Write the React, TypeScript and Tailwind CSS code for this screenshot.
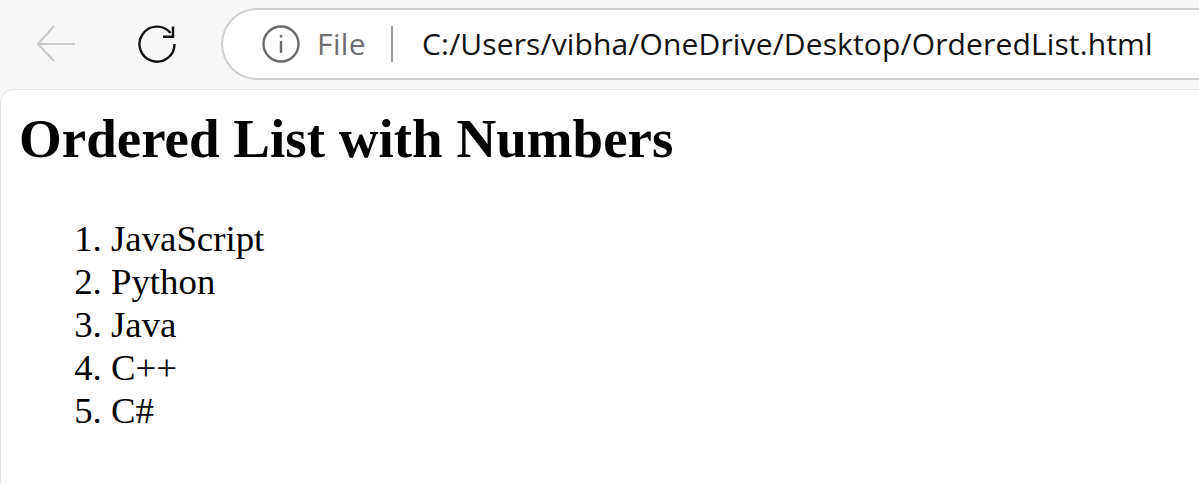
export default function App() {
  const languages = ['JavaScript', 'Python', 'Java', 'C++', 'C#'];

  return (
    <div className="w-[1199px] h-[484px] overflow-hidden bg-[#f7f7f7] font-['Liberation_Serif',serif]">
      {/* Browser toolbar */}
      <div className="h-[89px] flex items-center pl-[37px] pb-[1px] font-['Open_Sans',sans-serif]">
        <svg width="38" height="38" viewBox="0 0 38 38" fill="none" stroke="#c8c8c8" strokeWidth="2" className="shrink-0">
          <path d="M1 19H38M17 1L1 19L17 36" />
        </svg>
        <svg width="38" height="38" viewBox="0 0 38 38" fill="none" stroke="#111" strokeWidth="2.4" className="shrink-0 ml-[63px]">
          <path d="M36.5 19A17.5 17.5 0 1 1 32.5 8" />
          <path d="M35 1.5V11.7H25" />
        </svg>
        <div className="ml-[45px] w-[1000px] h-[72px] shrink-0 flex items-center rounded-l-full border-[2.5px] border-r-0 border-[#d0d0d0] bg-white pl-[39px]">
          <svg width="38" height="38" viewBox="0 0 38 38" fill="none" stroke="#6b6b6b" strokeWidth="2.4" className="shrink-0">
            <circle cx="19" cy="19" r="17.5" />
            <path d="M19 16V28M19 10V12.5" />
          </svg>
          <span className="ml-[17px] text-[30px] leading-none text-[#6e6e6e] tracking-[0.4px]">File</span>
          <div className="ml-[25px] w-[2px] h-[36px] bg-[#9a9a9a]" />
          <span className="ml-[29px] text-[30px] leading-none text-[#111] whitespace-nowrap tracking-[0.14px]">
            C:/Users/vibha/OneDrive/Desktop/OrderedList.html
          </span>
        </div>
      </div>

      {/* Page */}
      <div className="h-[395px] bg-white rounded-tl-[14px] border-l-[1.5px] border-t-[1.5px] border-[#e4e4e4] pl-[18px] text-black">
        <h1 className="mt-[18px] text-[55px] leading-[62px] font-bold">Ordered List with Numbers</h1>
        <ol className="mt-[47px] list-decimal pl-[92px] text-[36.8px] leading-[43px]">
          {languages.map((lang) => (
            <li key={lang}>{lang}</li>
          ))}
        </ol>
      </div>
    </div>
  );
}
